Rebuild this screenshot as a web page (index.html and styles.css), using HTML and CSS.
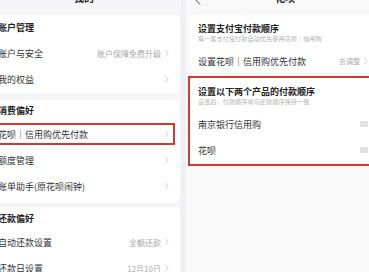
FILE: index.html
```html
<!DOCTYPE html>
<html lang="zh">
<head>
    <meta charset="UTF-8">
    <meta name="viewport" content="width=device-width, initial-scale=1.0">
    <title>花呗付款顺序</title>
    <link rel="stylesheet" href="styles.css">
</head>
<body>

    <div class="shot shot-left">
        <div class="topbar topbar-left"><span class="title">我的</span></div>

        <div class="card">
            <div class="group-title">账户管理</div>
            <div class="row">
                <span>账户与安全</span>
                <span class="extra">账户保障免费升级 <svg class="chev" viewBox="0 0 5 8"><path d="M1 .5 4.2 4 1 7.5"/></svg></span>
            </div>
            <div class="row">
                <span>我的权益</span>
                <span class="extra"><svg class="chev" viewBox="0 0 5 8"><path d="M1 .5 4.2 4 1 7.5"/></svg></span>
            </div>
        </div>

        <div class="card">
            <div class="group-title short">消费偏好</div>
            <div class="row marked">
                <span>花呗｜信用购优先付款</span>
                <span class="extra"><svg class="chev" viewBox="0 0 5 8"><path d="M1 .5 4.2 4 1 7.5"/></svg></span>
            </div>
            <div class="row">
                <span>额度管理</span>
                <span class="extra"><svg class="chev" viewBox="0 0 5 8"><path d="M1 .5 4.2 4 1 7.5"/></svg></span>
            </div>
            <div class="row">
                <span>账单助手(原花呗闹钟)</span>
                <span class="extra"><svg class="chev" viewBox="0 0 5 8"><path d="M1 .5 4.2 4 1 7.5"/></svg></span>
            </div>
        </div>

        <div class="card">
            <div class="group-title">还款偏好</div>
            <div class="row">
                <span>自动还款设置</span>
                <span class="extra">全额还款 <svg class="chev" viewBox="0 0 5 8"><path d="M1 .5 4.2 4 1 7.5"/></svg></span>
            </div>
            <div class="row">
                <span>还款日设置</span>
                <span class="extra">12月10日 <svg class="chev" viewBox="0 0 5 8"><path d="M1 .5 4.2 4 1 7.5"/></svg></span>
            </div>
        </div>
    </div>

    <div class="gutter"></div>

    <div class="shot shot-right">
        <div class="topbar topbar-right">
            <svg class="back" viewBox="0 0 6 10"><path d="M5 .5 1 5l4 4.5"/></svg>
            <span class="title">花呗</span>
        </div>

        <div class="card card-wide">
            <div class="card-head">设置支付宝付款顺序</div>
            <div class="card-sub">每一笔支付宝付款自动优先使用花呗｜信用购</div>
            <div class="row row-big">
                <span>设置花呗｜信用购优先付款</span>
                <span class="extra">去调整 <svg class="chev" viewBox="0 0 5 8"><path d="M1 .5 4.2 4 1 7.5"/></svg></span>
            </div>
        </div>

        <div class="card card-wide card-marked">
            <div class="card-head">设置以下两个产品的付款顺序</div>
            <div class="card-sub">设置后，付款顺序将与还款顺序保持一致</div>
            <div class="row row-sort">
                <span>南京银行信用购</span>
                <svg class="handle" viewBox="0 0 8 6"><path d="M0 1h8M0 3h8M0 5h8"/></svg>
            </div>
            <div class="row row-sort">
                <span>花呗</span>
                <svg class="handle" viewBox="0 0 8 6"><path d="M0 1h8M0 3h8M0 5h8"/></svg>
            </div>
        </div>
    </div>

</body>
</html>
```

FILE: styles.css
```css
* { box-sizing: border-box; }

body {
    margin: 0;
    width: 369px;
    height: 272px;
    overflow: hidden;
    display: flex;
    font-family: "Noto Sans CJK SC", "Noto Sans", sans-serif;
    color: #333;
    background: #f3f3f5;
}

.shot {
    height: 272px;
    overflow: hidden;
    background: #f5f5f7;
}

.shot-left { width: 181px; }
.shot-right { width: 183px; background: #f8f8f8; padding-left: 4px; }
.gutter { width: 5px; background: #f0f0f2; }

/* title bars, only the bottom of the glyphs is on screen */
.topbar {
    height: 15px;
    display: flex;
    align-items: flex-start;
    justify-content: center;
}
.topbar .title {
    margin-top: -7px;
    font-size: 10px;
    line-height: 10px;
    font-weight: bold;
    color: #222;
}
.topbar-left { padding-right: 13px; }
.topbar-right { padding-left: 11px; position: relative; }
.back {
    position: absolute;
    left: 5px;
    top: -5px;
    width: 6px;
    height: 10px;
    fill: none;
    stroke: #555;
    stroke-width: 1;
}

.card {
    background: #fff;
    border-radius: 5px;
    margin: 0 1px 7px -12px;
    padding: 0 11px 1px 10px;
}
.card + .card { margin-bottom: 5px; }
.shot-left .card:nth-child(3) { padding-bottom: 3px; }

.group-title {
    height: 25px;
    display: flex;
    align-items: center;
    font-size: 9px;
    font-weight: bold;
    color: #222;
}
.group-title.short { height: 21px; }
.shot-left .card:nth-child(4) .group-title { height: 22px; }

.row {
    height: 26px;
    display: flex;
    align-items: center;
    justify-content: space-between;
    font-size: 9px;
    color: #333;
}

.extra {
    display: flex;
    align-items: center;
    gap: 3px;
    font-size: 8px;
    color: #aaa;
}

.chev {
    width: 5px;
    height: 8px;
    fill: none;
    stroke: #c4c4c4;
    stroke-width: .8;
}

/* red annotation boxes */
.marked { position: relative; }
.marked::after {
    content: "";
    position: absolute;
    top: 2px;
    bottom: 2px;
    left: -4px;
    right: -6px;
    border: 2px solid #d23a2f;
}

.card-wide {
    margin: 0 -5px 0 0;
    padding: 8px 6px 1px 8px;
    border-radius: 4px;
}
.card-wide + .card-wide { margin-top: 6px; }

.card-marked {
    border-radius: 0;
    outline: 2px solid #d23a2f;
    padding-bottom: 1px;
}

.card-head {
    font-size: 9px;
    line-height: 11px;
    font-weight: bold;
    color: #222;
}
.card-sub {
    font-size: 6.2px;
    line-height: 9px;
    color: #b4b4b4;
}

.row-big {
    height: 20px;
    margin-top: 8px;
}
.row-big .extra { font-size: 7px; }

.card-marked .card-sub { margin-bottom: 5px; }

.handle {
    width: 8px;
    height: 6px;
    fill: none;
    stroke: #bdbdbd;
    stroke-width: .9;
}
```
